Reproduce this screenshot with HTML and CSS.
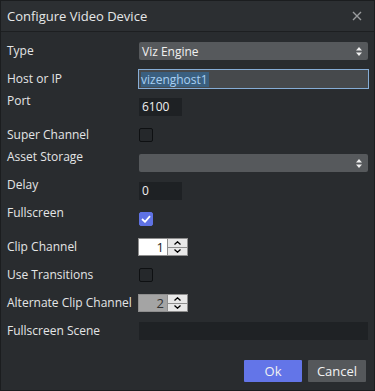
FILE: index.html
```html
<!DOCTYPE html>
<html lang="en">
  <head>
    <meta charset="utf-8" />
    <title>Configure Video Device</title>
    <link rel="stylesheet" href="styles.css">
  </head>
  <body>
    <div class="dialog">
      <div class="dialog-header">
        <span class="dialog-title">Configure Video Device</span>
        <svg class="close" width="10" height="10" viewBox="0 0 10 10">
          <path d="M1 1L9 9M9 1L1 9" stroke="#9a9c9e" stroke-width="1.4" fill="none" />
        </svg>
      </div>
      <form class="dialog-body">
        <div class="form-row">
          <label>Type</label>
          <div class="select">
            <span>Viz Engine</span>
            <svg class="updown" width="6" height="9" viewBox="0 0 6 9"><path d="M3 0L6 3.5H0ZM3 9L0 5.5H6Z" fill="#f0f0f0" /></svg>
          </div>
        </div>
        <div class="form-row">
          <label>Host or IP</label>
          <div class="text-input focused"><span class="sel">vizenghost1</span></div>
        </div>
        <div class="form-row top">
          <label>Port</label>
          <div class="short-input">6100</div>
        </div>
        <div class="form-row">
          <label>Super Channel</label>
          <span class="checkbox"></span>
        </div>
        <div class="form-row top">
          <label>Asset Storage</label>
          <div class="select">
            <span></span>
            <svg class="updown" width="6" height="9" viewBox="0 0 6 9"><path d="M3 0L6 3.5H0ZM3 9L0 5.5H6Z" fill="#f0f0f0" /></svg>
          </div>
        </div>
        <div class="form-row top">
          <label>Delay</label>
          <div class="short-input">0</div>
        </div>
        <div class="form-row top">
          <label>Fullscreen</label>
          <span class="checkbox checked">
            <svg width="10" height="8" viewBox="0 0 10 8"><path d="M1 4L4 6.8L9 1.2" stroke="#fff" stroke-width="1.8" fill="none" /></svg>
          </span>
        </div>
        <div class="form-row">
          <label>Clip Channel</label>
          <div class="spin">
            <span class="spin-value">1</span>
            <span class="spin-buttons">
              <span class="spin-btn"><svg width="7" height="4" viewBox="0 0 7 4"><path d="M0.5 3.5L3.5 0.8L6.5 3.5" stroke="#000" stroke-width="1.3" fill="none" /></svg></span>
              <span class="spin-btn"><svg width="7" height="4" viewBox="0 0 7 4"><path d="M0.5 0.5L3.5 3.2L6.5 0.5" stroke="#000" stroke-width="1.3" fill="none" /></svg></span>
            </span>
          </div>
        </div>
        <div class="form-row">
          <label>Use Transitions</label>
          <span class="checkbox"></span>
        </div>
        <div class="form-row">
          <label>Alternate Clip Channel</label>
          <div class="spin disabled">
            <span class="spin-value">2</span>
            <span class="spin-buttons">
              <span class="spin-btn"><svg width="7" height="4" viewBox="0 0 7 4"><path d="M0.5 3.5L3.5 0.8L6.5 3.5" stroke="#000" stroke-width="1.3" fill="none" /></svg></span>
              <span class="spin-btn"><svg width="7" height="4" viewBox="0 0 7 4"><path d="M0.5 0.5L3.5 3.2L6.5 0.5" stroke="#000" stroke-width="1.3" fill="none" /></svg></span>
            </span>
          </div>
        </div>
        <div class="form-row">
          <label>Fullscreen Scene</label>
          <div class="long-input"></div>
        </div>
      </form>
      <div class="dialog-footer">
        <button class="btn primary">Ok</button>
        <button class="btn">Cancel</button>
      </div>
    </div>
  </body>
</html>
```

FILE: styles.css
```css
html,
body {
  margin: 0;
  background: #292c2f;
}
body {
  font-family: "Open Sans", "Noto Sans", sans-serif;
  font-size: 12px;
  color: #e4e5e6;
}
.dialog {
  width: 375px;
  height: 391px;
  box-sizing: border-box;
  border: 1px solid #1b1d1f;
  background: #292c2f;
  display: flex;
  flex-direction: column;
}
.dialog-header {
  height: 30px;
  border-bottom: 1px solid #1d1f21;
  background: #2c2f32;
  display: flex;
  align-items: center;
  justify-content: space-between;
  padding: 0 12px 0 6px;
}
.dialog-title {
  font-size: 13px;
  color: #e6e7e8;
}
.close {
  display: block;
}
.dialog-body {
  margin: 0;
  padding: 5px 6px 0 6px;
}
.form-row {
  height: 28px;
  display: grid;
  grid-template-columns: 132px 1fr;
  align-items: center;
}
.form-row label {
  line-height: 16px;
  white-space: nowrap;
}
.form-row.top label {
  align-self: start;
}
.select {
  height: 18px;
  background: #56595c;
  border-radius: 2px;
  display: flex;
  align-items: center;
  justify-content: space-between;
  padding: 0 6px 0 3px;
  color: #f0f0f0;
}
.updown {
  display: block;
}
.text-input {
  height: 18px;
  margin: 0 -1px;
  border: 1px solid #86add6;
  background: #46494c;
  display: flex;
  align-items: center;
  padding: 0 2px;
}
.text-input .sel {
  background: #3a5f7f;
  color: #a9d0f2;
  line-height: 15px;
  padding-right: 1px;
}
.short-input {
  width: 43px;
  height: 18px;
  line-height: 18px;
  box-sizing: border-box;
  padding-left: 3px;
  background: #1e2124;
  color: #f0f0f0;
}
.long-input {
  height: 18px;
  background: #1f2225;
}
.checkbox {
  width: 14px;
  height: 14px;
  box-sizing: border-box;
  border: 1px solid #0e1012;
  border-radius: 2px;
  background: #25282b;
  display: flex;
  align-items: center;
  justify-content: center;
}
.checkbox.checked {
  background: #5f72e4;
  border-color: #5f72e4;
}
.spin {
  width: 50px;
  height: 18px;
  margin-left: -1px;
  box-sizing: border-box;
  border: 1px solid #8e8e8e;
  display: flex;
}
.spin-value {
  flex: 1;
  background: #ffffff;
  color: #222;
  text-align: right;
  padding-right: 3px;
  line-height: 16px;
  font-size: 13px;
}
.spin.disabled .spin-value {
  background: #a4a4a4;
  color: #333;
}
.spin-buttons {
  width: 19px;
  display: flex;
  flex-direction: column;
  border-left: 1px solid #8e8e8e;
}
.spin-btn {
  flex: 1;
  background: #e8e8e8;
  display: flex;
  align-items: center;
  justify-content: center;
}
.spin-btn + .spin-btn {
  border-top: 1px solid #8e8e8e;
}
.spin-btn svg {
  display: block;
}
.dialog-footer {
  margin-top: auto;
  padding: 0 8px 8px 0;
  display: flex;
  justify-content: flex-end;
  gap: 6px;
}
.btn {
  width: 58px;
  height: 22px;
  border: none;
  border-radius: 1px;
  background: #55585b;
  color: #f2f2f2;
  font-family: inherit;
  font-size: 13px;
  padding: 0;
}
.btn.primary {
  background: #6375e8;
}
```
